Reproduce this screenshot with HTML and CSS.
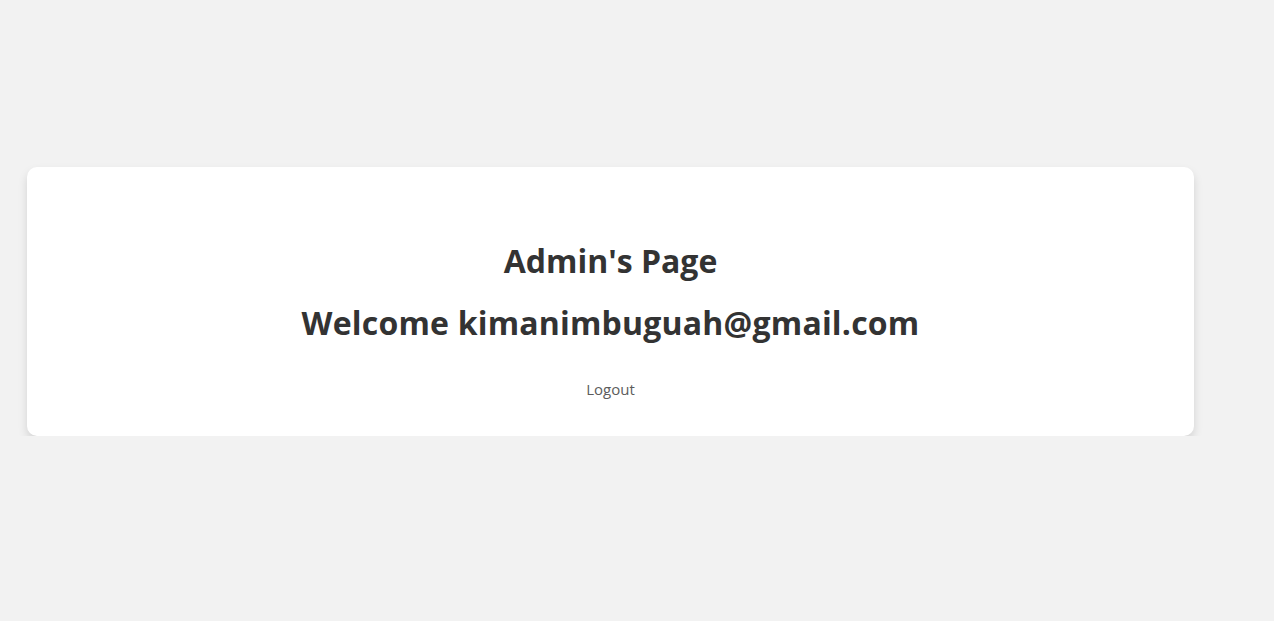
FILE: index.html
```html
<!DOCTYPE html>
<html lang="en">
<head>
<meta charset="utf-8">
<title>Admin's Page</title>
<link rel="stylesheet" href="styles.css">
</head>
<body>
<main class="page">
  <section class="card">
    <h2 class="title">Admin's Page</h2>
    <h2 class="welcome">Welcome kimanimbuguah@gmail.com</h2>
    <a class="logout" href="#">Logout</a>
  </section>
</main>
</body>
</html>
```

FILE: styles.css
```css
html, body {
  margin: 0;
  padding: 0;
}
body {
  background: #f2f2f2;
  font-family: "Open Sans", "Liberation Sans", sans-serif;
  color: #333;
}
.page {
  padding: 167px 80px 0 27px;
}
.card {
  background: #fff;
  border-radius: 10px;
  box-shadow: 0 5px 10px rgba(0, 0, 0, 0.13);
  height: 269px;
  box-sizing: border-box;
  padding-top: 70px;
  display: flex;
  flex-direction: column;
  align-items: center;
}
.title, .welcome {
  margin: 0;
  font-size: 32px;
  font-weight: 700;
  line-height: 48px;
  color: #333;
}
.welcome {
  margin-top: 14px;
  letter-spacing: 0.2px;
}
.logout {
  margin-top: 32px;
  font-size: 15px;
  color: #5c5c5c;
  text-decoration: none;
}
```
